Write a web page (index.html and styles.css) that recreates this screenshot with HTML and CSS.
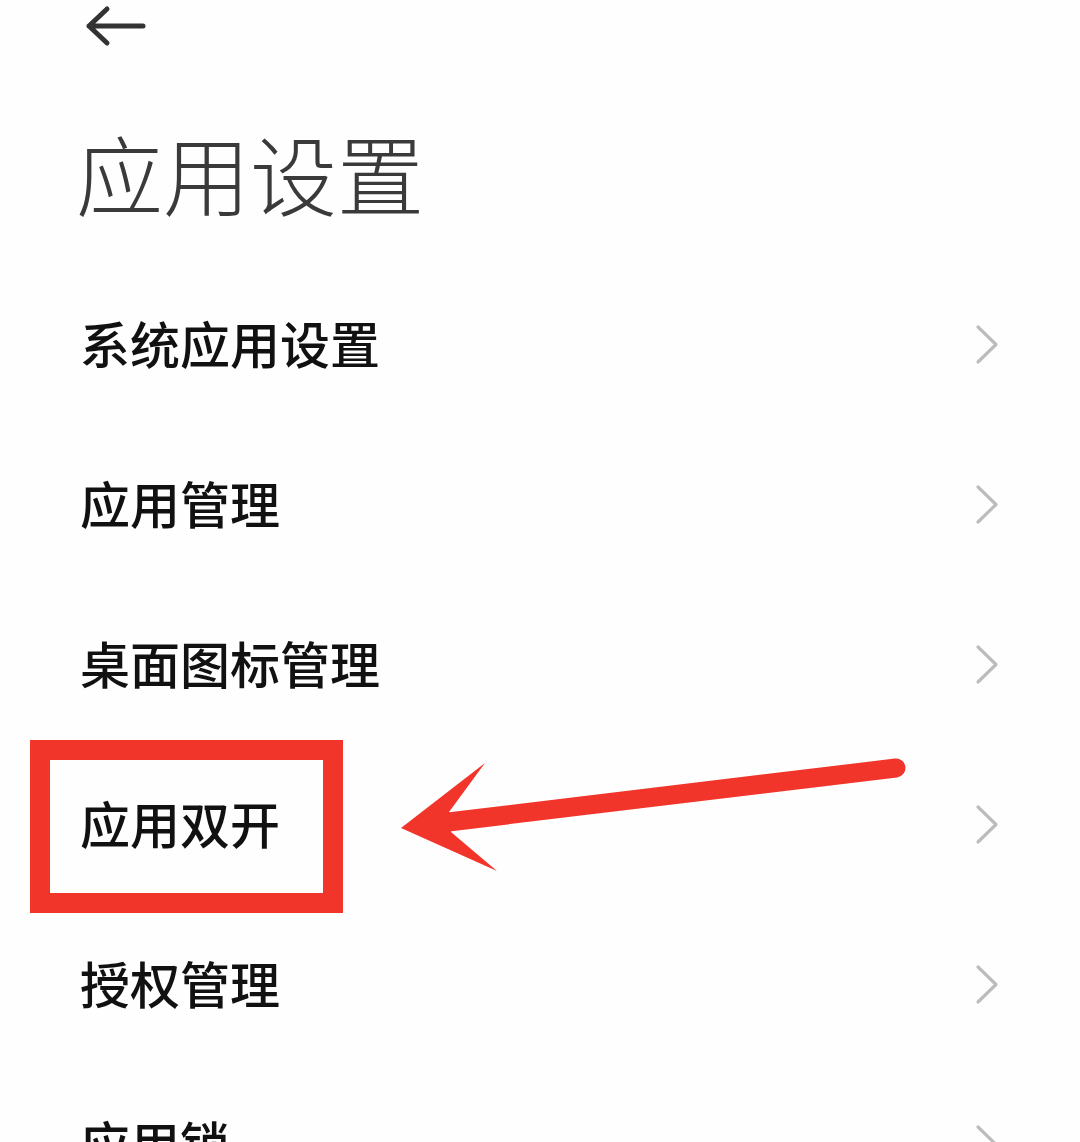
FILE: index.html
```html
<!DOCTYPE html>
<html lang="zh-CN">
<head>
<meta charset="utf-8">
<title>应用设置</title>
<link rel="stylesheet" href="styles.css">
</head>
<body>
<div class="page">
  <header class="topbar">
    <svg class="back" width="70" height="52" viewBox="0 0 70 52" aria-label="返回">
      <path d="M27 9 L9 26 L27 43 M9 26 H63" fill="none" stroke="#333" stroke-width="5" stroke-linecap="round" stroke-linejoin="round"/>
    </svg>
  </header>
  <h1 class="title">应用设置</h1>
  <ul class="list">
    <li class="row"><span class="label">系统应用设置</span><svg class="chev" width="26" height="41" viewBox="0 0 26 41"><path d="M3 3 L21 20.5 L3 38" fill="none" stroke="#bcbcbc" stroke-width="3.2" stroke-linecap="round" stroke-linejoin="round"/></svg></li>
    <li class="row"><span class="label">应用管理</span><svg class="chev" width="26" height="41" viewBox="0 0 26 41"><path d="M3 3 L21 20.5 L3 38" fill="none" stroke="#bcbcbc" stroke-width="3.2" stroke-linecap="round" stroke-linejoin="round"/></svg></li>
    <li class="row"><span class="label">桌面图标管理</span><svg class="chev" width="26" height="41" viewBox="0 0 26 41"><path d="M3 3 L21 20.5 L3 38" fill="none" stroke="#bcbcbc" stroke-width="3.2" stroke-linecap="round" stroke-linejoin="round"/></svg></li>
    <li class="row"><span class="label">应用双开</span><svg class="chev" width="26" height="41" viewBox="0 0 26 41"><path d="M3 3 L21 20.5 L3 38" fill="none" stroke="#bcbcbc" stroke-width="3.2" stroke-linecap="round" stroke-linejoin="round"/></svg></li>
    <li class="row"><span class="label">授权管理</span><svg class="chev" width="26" height="41" viewBox="0 0 26 41"><path d="M3 3 L21 20.5 L3 38" fill="none" stroke="#bcbcbc" stroke-width="3.2" stroke-linecap="round" stroke-linejoin="round"/></svg></li>
    <li class="row"><span class="label">应用锁</span><svg class="chev" width="26" height="41" viewBox="0 0 26 41"><path d="M3 3 L21 20.5 L3 38" fill="none" stroke="#bcbcbc" stroke-width="3.2" stroke-linecap="round" stroke-linejoin="round"/></svg></li>
  </ul>
  <svg class="annotation" width="1080" height="1142" viewBox="0 0 1080 1142" aria-hidden="true">
    <rect x="40" y="750" width="293" height="153" fill="none" stroke="#f2352b" stroke-width="20"/>
    <line x1="440" y1="823" x2="896" y2="768" stroke="#f2352b" stroke-width="19" stroke-linecap="round"/>
    <polygon points="401,828 485,763 449,812 451,832 497,871" fill="#f2352b"/>
  </svg>
</div>
</body>
</html>
```

FILE: styles.css
```css
html, body {
  margin: 0;
  padding: 0;
  overflow: hidden;
  background: #fefefe;
}

.page {
  position: relative;
  width: 1080px;
  height: 1142px;
  overflow: hidden;
  font-family: "Noto Sans CJK SC", "Noto Sans", sans-serif;
}

.topbar {
  height: 55px;
  padding-left: 80px;
  display: flex;
  align-items: flex-start;
}

.back {
  display: block;
}

.title {
  margin: 57px 0 0 0;
  padding-left: 76px;
  font-size: 87px;
  line-height: 120px;
  height: 120px;
  font-weight: 300;
  color: #3a3a3a;
}

.list {
  list-style: none;
  margin: 30px 0 0 0;
  padding: 0;
}

.row {
  height: 160px;
  display: flex;
  align-items: center;
  justify-content: space-between;
  padding: 0 79px 0 80px;
}

.label {
  font-size: 50px;
  line-height: 160px;
  font-weight: 500;
  color: #111;
}

.chev {
  display: block;
  margin-top: 5px;
}

.annotation {
  position: absolute;
  top: 0;
  left: 0;
  pointer-events: none;
}
```
